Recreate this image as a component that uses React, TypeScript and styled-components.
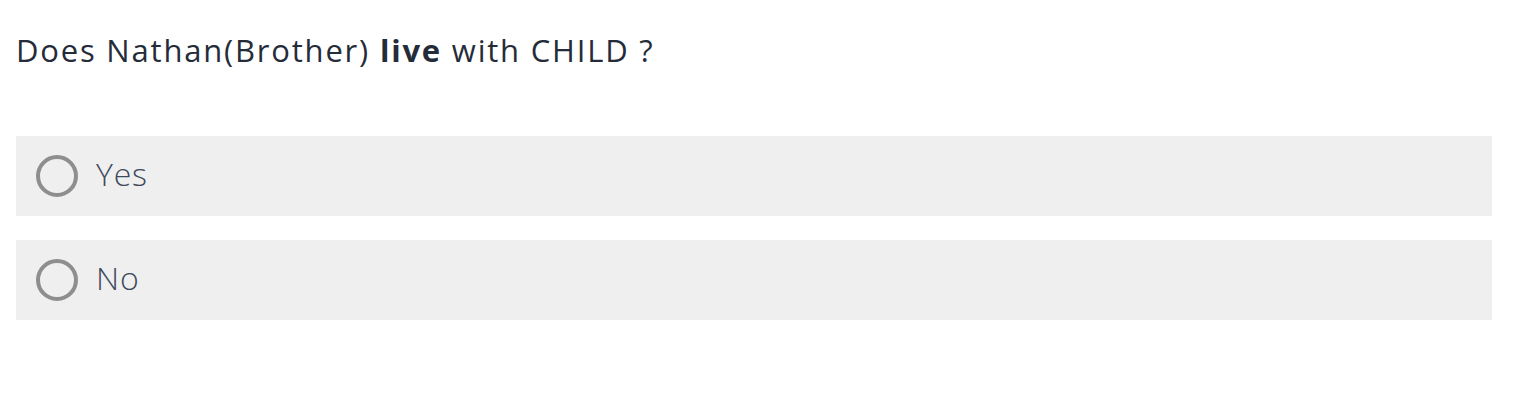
import React, { FC, useState } from 'react'
import styled, { createGlobalStyle } from 'styled-components'

const GlobalStyle = createGlobalStyle`
    body {
        margin: 0;
        background: #ffffff;
        font-family: 'Open Sans', 'Liberation Sans', sans-serif;
    }
`

const Page = styled.div`
    padding: 28px 28px 0 16px;
`

const Question = styled.h2`
    margin: 0 0 64px 0;
    font-size: 31px;
    line-height: 44px;
    font-weight: 500;
    letter-spacing: 1.8px;
    color: #252c39;

    b {
        font-weight: 700;
    }
`

const Options = styled.div`
    display: flex;
    flex-direction: column;
    gap: 24px;
`

const Option = styled.label`
    display: flex;
    align-items: center;
    gap: 18px;
    height: 80px;
    padding: 0 20px;
    box-sizing: border-box;
    background: #efefef;
    cursor: pointer;
`

const Radio = styled.span<{ checked: boolean }>`
    width: 42px;
    height: 42px;
    box-sizing: border-box;
    border-radius: 50%;
    border: 4px solid #8e8e8e;
    background: ${p => (p.checked ? '#8e8e8e' : 'transparent')};
    flex-shrink: 0;
`

const OptionText = styled.span`
    font-size: 32px;
    line-height: 40px;
    padding-bottom: 4px;
    font-weight: 300;
    letter-spacing: 0.8px;
    color: #3e4a5c;
`

const App: FC = () => {
    const [answer, setAnswer] = useState<string | null>(null)
    const choices = ['Yes', 'No']

    return (
        <>
            <GlobalStyle />
            <Page>
                <Question>
                    Does Nathan(Brother) <b>live</b> with CHILD ?
                </Question>
                <Options>
                    {choices.map(choice => (
                        <Option key={choice} onClick={() => setAnswer(choice)}>
                            <Radio checked={answer === choice} />
                            <OptionText>{choice}</OptionText>
                        </Option>
                    ))}
                </Options>
            </Page>
        </>
    )
}

export default App
